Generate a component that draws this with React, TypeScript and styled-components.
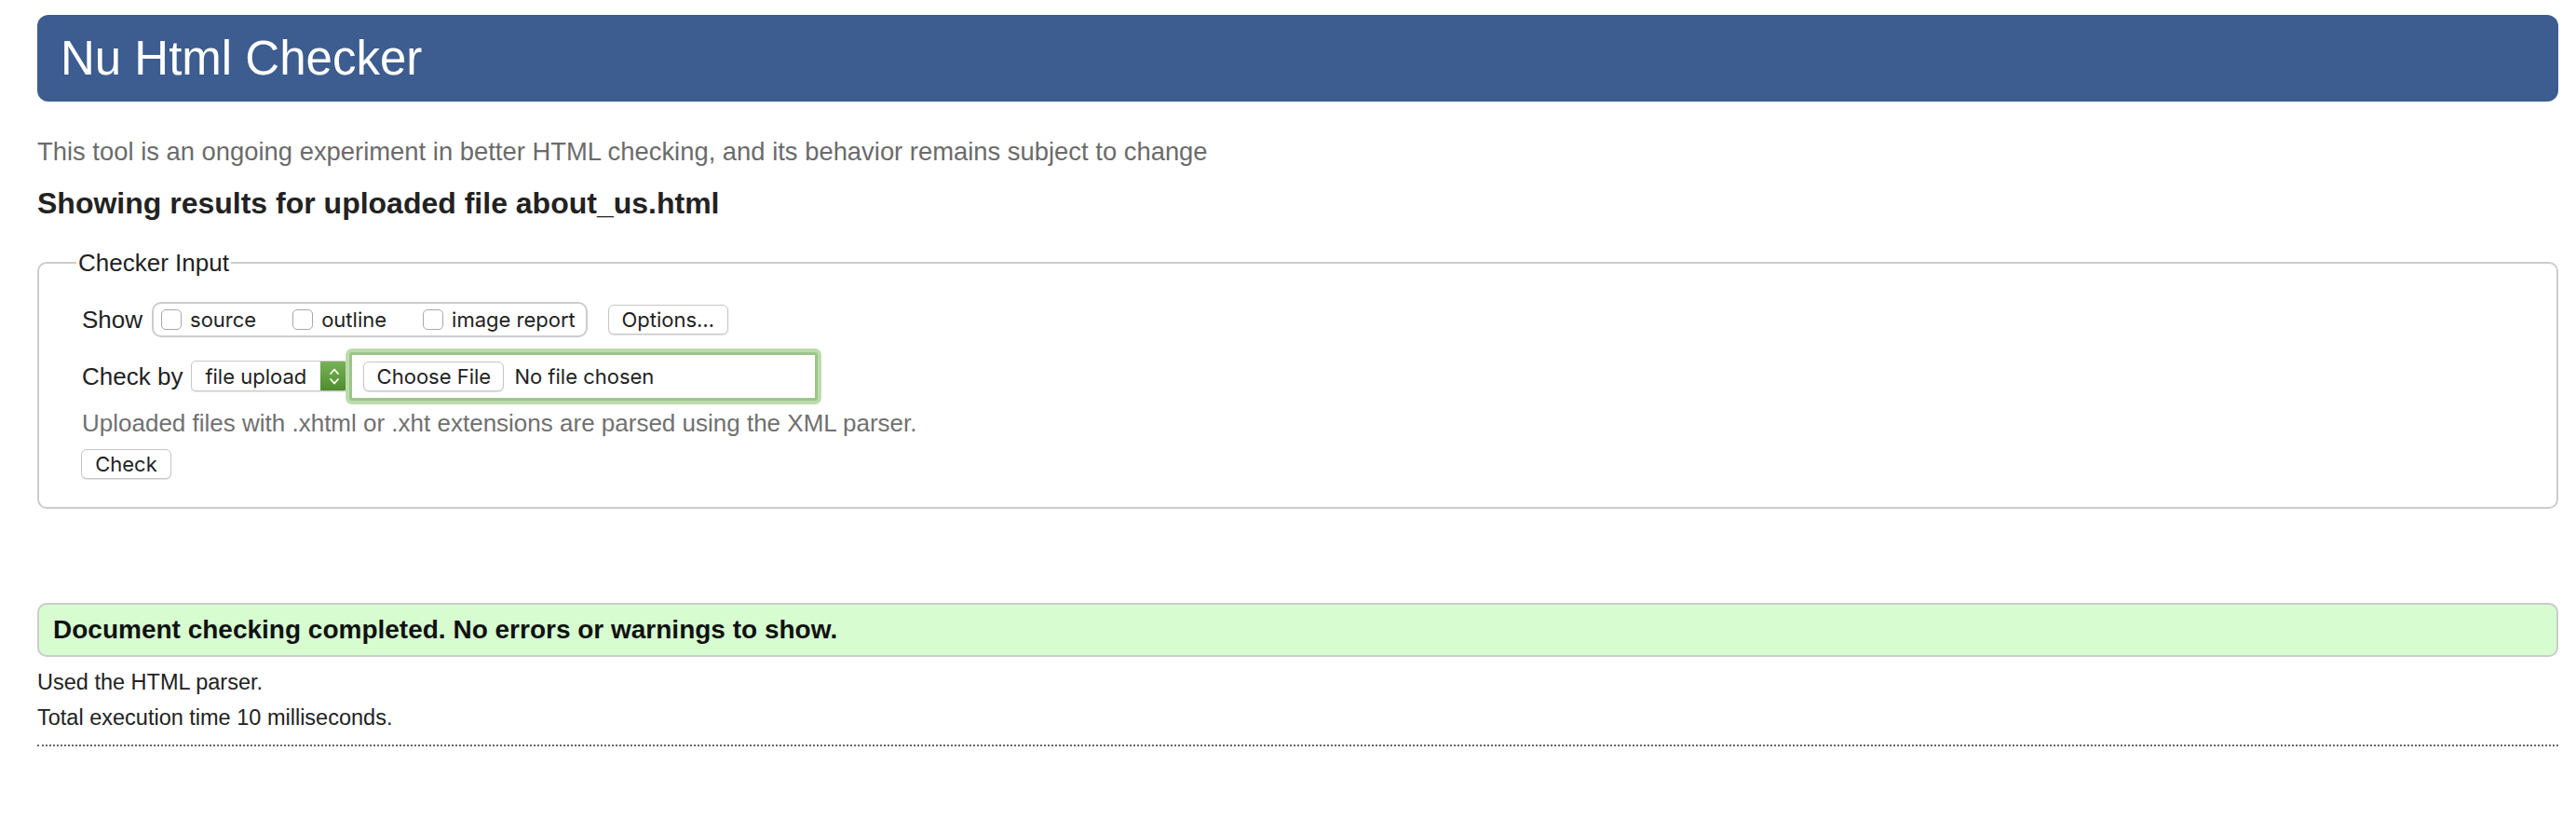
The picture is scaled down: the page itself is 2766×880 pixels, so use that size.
import React from "react";
import styled, { createGlobalStyle } from "styled-components";

const GlobalStyle = createGlobalStyle`
  html, body { margin: 0; padding: 0; background: #ffffff; }
  body {
    font-family: "Liberation Sans", Arial, Helvetica, sans-serif;
    color: #222222;
  }
`;

const Page = styled.div`
  padding: 16px 19px 40px 40px;
`;

const Header = styled.header`
  height: 93px;
  display: flex;
  align-items: center;
  padding-left: 25px;
  background: #3d5c8f;
  border-radius: 12px;
`;

const Title = styled.h1`
  margin: 0;
  font-size: 51px;
  font-weight: 400;
  line-height: 60px;
  color: #ffffff;
`;

const Subtitle = styled.p`
  margin: 38px 0 0;
  font-size: 27.4px;
  line-height: 32px;
  color: #6b6b6b;
`;

const Heading = styled.h2`
  margin: 20.9px 0 0;
  font-size: 32px;
  line-height: 36px;
  font-weight: 700;
  color: #222222;
`;

const Fieldset = styled.fieldset`
  margin: 31.1px 0 0;
  padding: 27px 0 30px 0;
  border: 2px solid #cccccc;
  border-radius: 10px;
  min-width: 0;
`;

const Legend = styled.legend`
  margin-left: 40px;
  padding: 0 2px;
  font-size: 26px;
  line-height: 30px;
  color: #222222;
`;

const FieldBody = styled.div`
  padding-left: 46px;
`;

const Row = styled.div<{ $h: number; $mt?: number }>`
  display: flex;
  align-items: center;
  height: ${(p) => p.$h}px;
  margin-top: ${(p) => p.$mt ?? 0}px;
`;

const Label = styled.span`
  font-size: 26px;
  line-height: 30px;
  color: #222222;
`;

const CheckGroup = styled.div`
  display: flex;
  align-items: center;
  height: 38px;
  box-sizing: border-box;
  margin-left: 10px;
  padding: 0 11px 0 8px;
  border: 2px solid #cccccc;
  border-radius: 10px;
  gap: 39px;
`;

const CheckItem = styled.label`
  display: flex;
  align-items: center;
  gap: 9px;
  font-family: Inter, "Noto Sans", sans-serif;
  font-size: 22px;
  color: #222222;
`;

const Box = styled.input`
  appearance: none;
  margin: 0;
  width: 22px;
  height: 22px;
  box-sizing: border-box;
  border: 1px solid #a8a8a8;
  border-radius: 5px;
  background: #ffffff;
`;

const Button = styled.button<{ $w: number; $ml?: number }>`
  width: ${(p) => p.$w}px;
  height: 32px;
  margin-left: ${(p) => p.$ml ?? 0}px;
  padding: 0;
  box-sizing: border-box;
  border: 1px solid #c6c6c6;
  border-radius: 6px;
  background: #ffffff;
  box-shadow: 0 1px 1px rgba(0, 0, 0, 0.12);
  font-family: Inter, "Noto Sans", sans-serif;
  font-size: 22px;
  color: #222222;
  flex: none;
`;

const Select = styled.div`
  display: flex;
  align-items: stretch;
  width: 169px;
  height: 33px;
  margin-left: 9px;
  box-sizing: border-box;
  border: 1px solid #c8c8c8;
  border-radius: 5px;
  background: #ffffff;
  box-shadow: 0 1px 1px rgba(0, 0, 0, 0.1);
  overflow: hidden;
  flex: none;
`;

const SelectText = styled.span`
  flex: 1;
  display: flex;
  align-items: center;
  padding-left: 14px;
  font-family: Inter, "Noto Sans", sans-serif;
  font-size: 22px;
  color: #222222;
`;

const SelectArrow = styled.span`
  width: 29px;
  display: flex;
  align-items: center;
  justify-content: center;
  background: linear-gradient(#78b356, #4f8c30);
`;

const FileBox = styled.div`
  display: flex;
  align-items: center;
  width: 503px;
  height: 52px;
  margin-left: 1px;
  box-sizing: border-box;
  padding-left: 12px;
  border: 3px solid #9cc689;
  border-radius: 3px;
  box-shadow: 0 0 0 4px #bcdcad;
  background: #ffffff;
  flex: none;
`;

const FileText = styled.span`
  margin-left: 11px;
  font-family: Inter, "Noto Sans", sans-serif;
  font-size: 22px;
  color: #222222;
`;

const Help = styled.p`
  margin: 5px 0 0;
  font-size: 26px;
  line-height: 30px;
  color: #707070;
`;

const CheckRow = styled.div`
  margin-top: 13px;
  margin-left: -1px;
`;

const Result = styled.div`
  display: flex;
  align-items: center;
  height: 58px;
  margin-top: 101px;
  box-sizing: border-box;
  padding-left: 15px;
  border: 2px solid #cccccc;
  border-radius: 10px;
  background: #d6fcd0;
  font-size: 28px;
  font-weight: 700;
  color: #111111;
`;

const Info = styled.p<{ $mt: number }>`
  margin: ${(p) => p.$mt}px 0 0;
  font-size: 23.5px;
  line-height: 38px;
  color: #222222;
`;

const Rule = styled.hr`
  margin: 10px 0 0;
  border: 0;
  border-top: 2px dotted #666666;
  height: 0;
`;

const Chevrons = () => (
  <svg width="14" height="22" viewBox="0 0 14 22" fill="none">
    <path d="M3 8 L7 3.5 L11 8" stroke="#ffffff" strokeWidth="1.8" strokeLinecap="round" strokeLinejoin="round" />
    <path d="M3 14 L7 18.5 L11 14" stroke="#ffffff" strokeWidth="1.8" strokeLinecap="round" strokeLinejoin="round" />
  </svg>
);

const options = ["source", "outline", "image report"];

export default function App() {
  return (
    <>
      <GlobalStyle />
      <Page>
        <Header>
          <Title>Nu Html Checker</Title>
        </Header>
        <Subtitle>
          This tool is an ongoing experiment in better HTML checking, and its behavior remains subject to change
        </Subtitle>
        <Heading>Showing results for uploaded file about_us.html</Heading>
        <Fieldset>
          <Legend>Checker Input</Legend>
          <FieldBody>
            <Row $h={38}>
              <Label>Show</Label>
              <CheckGroup>
                {options.map((o) => (
                  <CheckItem key={o}>
                    <Box type="checkbox" />
                    {o}
                  </CheckItem>
                ))}
              </CheckGroup>
              <Button $w={129} $ml={22}>Options…</Button>
            </Row>
            <Row $h={60} $mt={12}>
              <Label>Check by</Label>
              <Select>
                <SelectText>file upload</SelectText>
                <SelectArrow>
                  <Chevrons />
                </SelectArrow>
              </Select>
              <FileBox>
                <Button $w={151}>Choose File</Button>
                <FileText>No file chosen</FileText>
              </FileBox>
            </Row>
            <Help>Uploaded files with .xhtml or .xht extensions are parsed using the XML parser.</Help>
            <CheckRow>
              <Button $w={97}>Check</Button>
            </CheckRow>
          </FieldBody>
        </Fieldset>
        <Result>Document checking completed. No errors or warnings to show.</Result>
        <Info $mt={8.4}>Used the HTML parser.</Info>
        <Info $mt={0}>Total execution time 10 milliseconds.</Info>
        <Rule />
      </Page>
    </>
  );
}
